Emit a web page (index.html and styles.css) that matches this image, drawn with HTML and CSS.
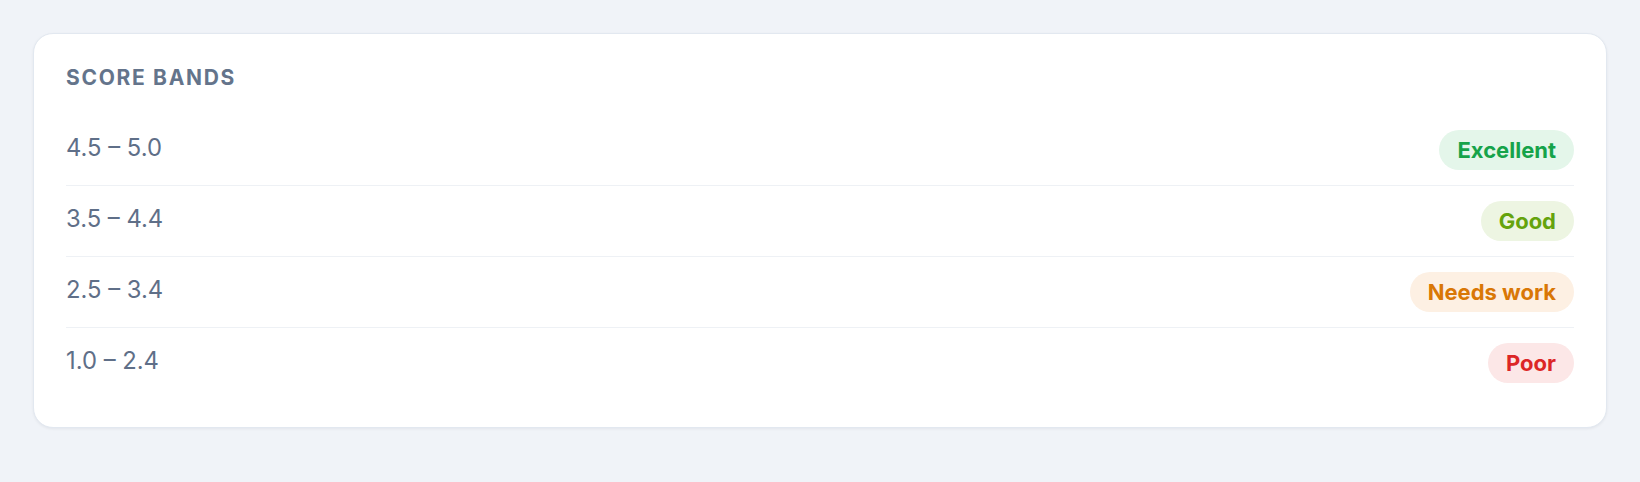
FILE: index.html
```html
<!DOCTYPE html>
<html lang="en">
<head>
<meta charset="utf-8">
<title>Score bands</title>
<link rel="stylesheet" href="styles.css">
</head>
<body>
  <section class="card">
    <h2 class="card-title">SCORE BANDS</h2>
    <ul class="bands">
      <li class="band">
        <span class="range">4.5 – 5.0</span>
        <span class="pill pill-excellent">Excellent</span>
      </li>
      <li class="band">
        <span class="range">3.5 – 4.4</span>
        <span class="pill pill-good">Good</span>
      </li>
      <li class="band">
        <span class="range">2.5 – 3.4</span>
        <span class="pill pill-needs">Needs work</span>
      </li>
      <li class="band">
        <span class="range">1.0 – 2.4</span>
        <span class="pill pill-poor">Poor</span>
      </li>
    </ul>
  </section>
</body>
</html>
```
FILE: styles.css
```css
* { box-sizing: border-box; }

html, body {
  margin: 0;
  background: #f0f3f8;
}

body {
  padding: 33px;
  font-family: Inter, "Noto Sans", sans-serif;
}

.card {
  background: #ffffff;
  border: 1px solid #e2e8f0;
  border-radius: 20px;
  box-shadow: 0 1px 3px rgba(15, 23, 42, 0.06);
  padding: 30px 32px 29px;
}

.card-title {
  margin: 0 0 23px;
  font-size: 21px;
  line-height: 28px;
  font-weight: 700;
  letter-spacing: 0.08em;
  color: #64748b;
}

.bands {
  list-style: none;
  margin: 0;
  padding: 0;
}

.band {
  display: flex;
  align-items: center;
  justify-content: space-between;
  padding: 15px 0;
  border-bottom: 1px solid #eef1f5;
}

.band:last-child { border-bottom: none; }

.range {
  font-size: 23.8px;
  line-height: 27px;
  color: #5f6f88;
  margin-bottom: 5px;
}

.pill {
  display: inline-flex;
  align-items: center;
  height: 40px;
  padding: 0 18px;
  border-radius: 20px;
  font-size: 22px;
  font-weight: 700;
}

.pill-excellent { background: #e4f6ea; color: #16a34a; }
.pill-good { background: #edf5e2; color: #65a30d; }
.pill-needs { background: #fdf0e3; color: #d97706; }
.pill-poor { background: #fce7e7; color: #dc2626; }
```
